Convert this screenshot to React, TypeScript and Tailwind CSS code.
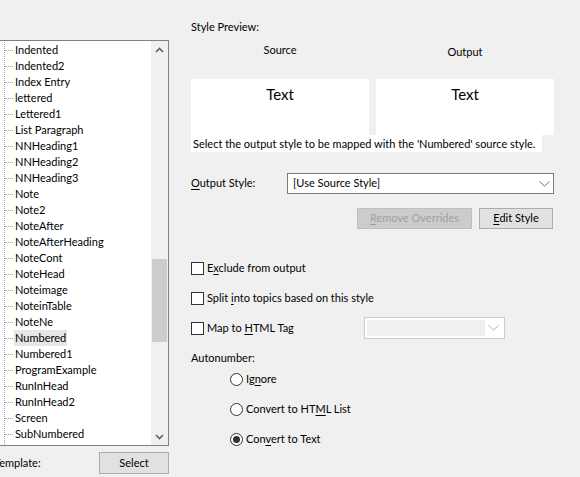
import React from 'react';

const styles = [
  'Indented',
  'Indented2',
  'Index Entry',
  'lettered',
  'Lettered1',
  'List Paragraph',
  'NNHeading1',
  'NNHeading2',
  'NNHeading3',
  'Note',
  'Note2',
  'NoteAfter',
  'NoteAfterHeading',
  'NoteCont',
  'NoteHead',
  'Noteimage',
  'NoteinTable',
  'NoteNe',
  'Numbered',
  'Numbered1',
  'ProgramExample',
  'RunInHead',
  'RunInHead2',
  'Screen',
  'SubNumbered',
];

function Chevron({ up = false, color = '#606060' }: { up?: boolean; color?: string }) {
  return (
    <svg width="9" height="6" viewBox="0 0 9 6" className="block">
      <path
        d={up ? 'M1 5 L4.5 1.5 L8 5' : 'M1 1 L4.5 4.5 L8 1'}
        fill="none"
        stroke={color}
        strokeWidth="1.6"
      />
    </svg>
  );
}

function DropArrow({ color = '#707070' }: { color?: string }) {
  return (
    <svg width="11" height="6" viewBox="0 0 11 6" className="block">
      <path d="M0.5 0.5 L5.5 5 L10.5 0.5" fill="none" stroke={color} strokeWidth="1" />
    </svg>
  );
}

function Key({ children }: { children: React.ReactNode }) {
  return <span className="underline underline-offset-2 decoration-1">{children}</span>;
}

function Checkbox({ children }: { children: React.ReactNode }) {
  return (
    <div className="flex items-center h-4">
      <span className="w-[13px] h-[13px] border border-[#333333] bg-white shrink-0" />
      <span className="ml-[3px]">{children}</span>
    </div>
  );
}

function Radio({ checked = false, children }: { checked?: boolean; children: React.ReactNode }) {
  return (
    <div className="flex items-center h-4">
      <span className="w-[13px] h-[13px] rounded-full border border-[#333333] bg-white shrink-0 flex items-center justify-center">
        {checked && <span className="w-[7px] h-[7px] rounded-full bg-[#333333]" />}
      </span>
      <span className="ml-[3px]">{children}</span>
    </div>
  );
}

function StyleList() {
  return (
    <div className="mt-[40px] ml-[-1px] w-[170px] h-[406px] border border-[#828282] bg-white flex">
      <div className="flex-1 pt-px">
        <div className="ml-[4px] border-l border-dotted border-[#a0a0a0] h-full">
          {styles.map((s) => (
            <div key={s} className="flex items-center h-4">
              <span className="w-[8px] border-t border-dotted border-[#a0a0a0]" />
              <span
                className={
                  'ml-[1px] px-[1px] leading-4 ' + (s === 'Numbered' ? 'bg-[#e6e6e6]' : '')
                }
              >
                {s}
              </span>
            </div>
          ))}
        </div>
      </div>
      <div className="w-[17px] bg-[#f0f0f0] flex flex-col">
        <div className="h-[17px] flex items-center justify-center">
          <Chevron up />
        </div>
        <div className="h-[201px]" />
        <div className="h-[83px] mx-[1px] bg-[#cdcdcd]" />
        <div className="flex-1" />
        <div className="h-[17px] flex items-center justify-center">
          <Chevron />
        </div>
      </div>
    </div>
  );
}

export default function App() {
  return (
    <div
      className="w-[580px] h-[477px] overflow-hidden bg-[#f0f0f0] text-black text-[11px] flex"
      style={{ fontFamily: 'Lato, "Noto Sans", sans-serif' }}
    >
      <div className="w-[180px] shrink-0">
        <StyleList />
        <div className="mt-[6px] flex items-center">
          <span className="ml-[-6px] w-[105px]">Template:</span>
          <button className="w-[70px] h-[22px] bg-[#e1e1e1] border border-[#adadad] text-[11px]">
            Select
          </button>
        </div>
      </div>

      <div className="pl-[11px] pt-[19px] w-[400px]">
        <div className="w-[363px]">
          <div className="leading-4">Style Preview:</div>

          <div className="flex gap-[7px] mt-[7px]">
            <div className="w-[178px] text-center leading-4">Source</div>
            <div className="w-[178px] text-center leading-4 pt-[2px]">Output</div>
          </div>

          <div className="flex gap-[7px] mt-[19px]">
            <div className="w-[178px] h-[56px] bg-white text-center text-[15px] leading-5 pt-[5px]">
              Text
            </div>
            <div className="w-[178px] h-[56px] bg-white text-center text-[15px] leading-5 pt-[5px]">
              Text
            </div>
          </div>
          <div className="w-[351px] h-[17px] leading-[17px] bg-white pl-[2px] whitespace-nowrap">
            Select the output style to be mapped with the 'Numbered' source style.
          </div>

          <div className="flex items-center mt-[21px]">
            <div className="w-[96px]">
              <Key>O</Key>utput Style:
            </div>
            <div className="w-[267px] h-[21px] bg-white border border-[#7a7a7a] flex items-center pl-[5px] pr-[3px]">
              <span className="flex-1">[Use Source Style]</span>
              <DropArrow />
            </div>
          </div>

          <div className="flex justify-end gap-[7px] mt-[14px] pr-[1px]">
            <button className="w-[115px] h-[21px] bg-[#cccccc] border border-[#bfbfbf] text-[#a0a0a0] text-[11px]">
              <Key>R</Key>emove Overrides
            </button>
            <button className="w-[74px] h-[21px] bg-[#e1e1e1] border border-[#adadad] text-[11px]">
              <Key>E</Key>dit Style
            </button>
          </div>

          <div className="mt-[31px] flex flex-col gap-[14px]">
            <Checkbox>
              E<Key>x</Key>clude from output
            </Checkbox>
            <Checkbox>
              Split <Key>i</Key>nto topics based on this style
            </Checkbox>
            <div className="flex items-center h-4">
              <div className="w-[173px]">
                <Checkbox>
                  Map to <Key>H</Key>TML Tag
                </Checkbox>
              </div>
              <div className="w-[141px] h-[22px] bg-white border border-[#cccccc] flex items-center p-[2px]">
                <div className="w-[118px] h-full bg-[#f0f0f0]" />
                <div className="flex-1 flex justify-center">
                  <DropArrow color="#b0b0b0" />
                </div>
              </div>
            </div>
          </div>

          <div className="mt-[14px] leading-4">Autonumber:</div>
          <div className="pl-[39px] mt-[5px] flex flex-col gap-[14px]">
            <Radio>
              Ig<Key>n</Key>ore
            </Radio>
            <Radio>
              Convert to HT<Key>M</Key>L List
            </Radio>
            <Radio checked>
              Con<Key>v</Key>ert to Text
            </Radio>
          </div>
        </div>
      </div>
    </div>
  );
}
